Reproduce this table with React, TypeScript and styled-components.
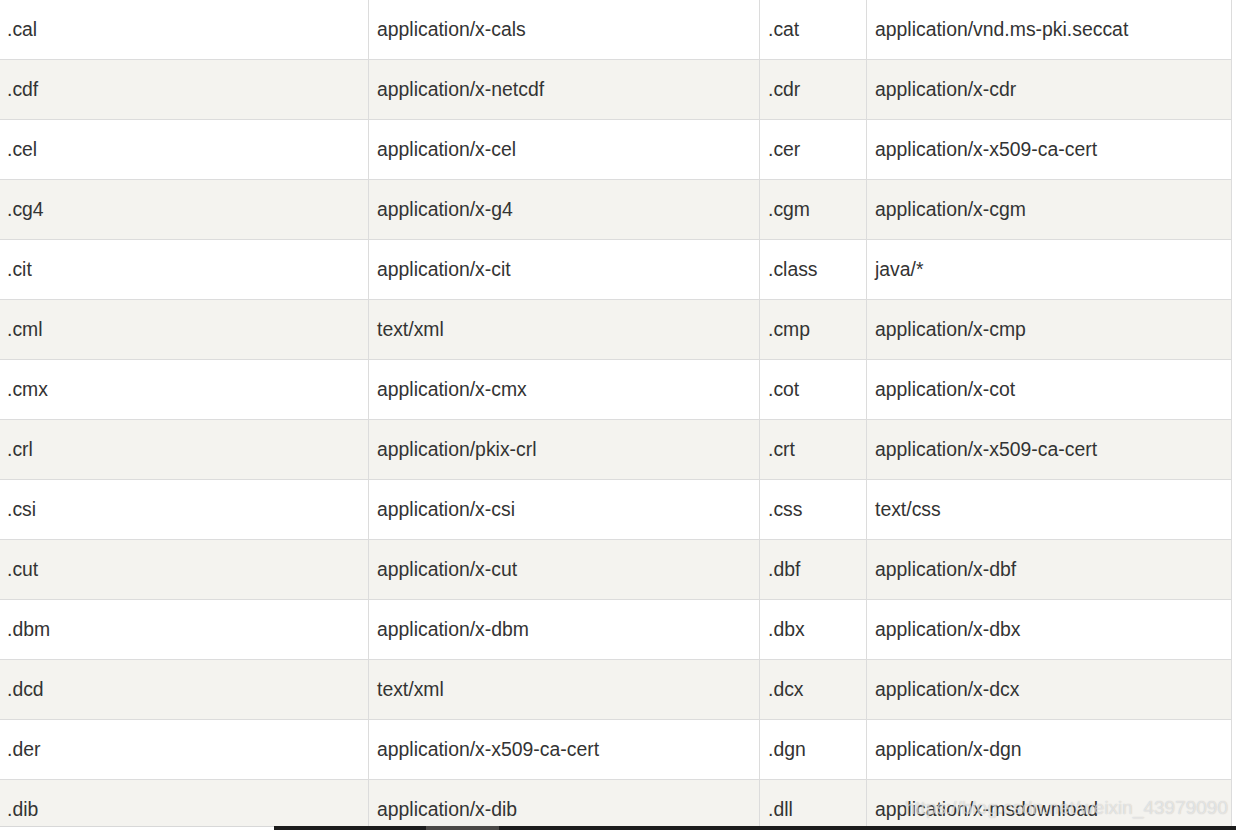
import React from 'react';
import styled, { createGlobalStyle } from 'styled-components';

const GlobalStyle = createGlobalStyle`
  html, body {
    margin: 0;
    padding: 0;
    background: #ffffff;
  }
  body {
    font-family: "Liberation Sans", Arial, sans-serif;
    color: #333333;
    overflow: hidden;
  }
`;

const Page = styled.div`
  position: relative;
  width: 1236px;
  height: 830px;
  overflow: hidden;
  background: #ffffff;
`;

const Viewport = styled.div`
  height: 826px;
  overflow: hidden;
`;

// separate borders so each cell owns its right/bottom line
const Table = styled.table`
  width: 1232px;
  border-collapse: separate;
  border-spacing: 0;
  table-layout: fixed;
  font-size: 19.4px;
  color: #333333;
`;

const Row = styled.tr<{ $alt: boolean }>`
  height: 60px;
  background: ${(p) => (p.$alt ? '#f4f3ef' : '#ffffff')};
`;

const Cell = styled.td<{ $first?: boolean }>`
  box-sizing: border-box;
  height: 60px;
  padding: 0 8px 2px;
  padding-left: ${(p) => (p.$first ? '7px' : '8px')};
  border-right: 1px solid #dcdcdc;
  border-bottom: 1px solid #dcdcdc;
  vertical-align: middle;
  white-space: nowrap;
  line-height: 20px;
`;

// bottom strip: grey line on the left, dark scrollbar track on the right
const BottomStrip = styled.div`
  display: flex;
  height: 4px;
`;

const StripLeft = styled.div`
  width: 274px;
  border-top: 1px solid #d8d8d8;
  box-sizing: border-box;
  background: #ffffff;
`;

const Track = styled.div`
  flex: 1;
  display: flex;
  background: #1c1c1c;
`;

const TrackGap = styled.div`
  width: 152px;
`;

const Thumb = styled.div`
  width: 73px;
  background: #4a4846;
`;

const Watermark = styled.div`
  position: absolute;
  right: 8px;
  top: 797px;
  font-size: 19px;
  color: rgba(255, 255, 255, 0.55);
  text-shadow: 0 0 1px rgba(120, 120, 120, 0.45);
  white-space: nowrap;
  pointer-events: none;
`;

const rows: [string, string, string, string][] = [
  ['.cal', 'application/x-cals', '.cat', 'application/vnd.ms-pki.seccat'],
  ['.cdf', 'application/x-netcdf', '.cdr', 'application/x-cdr'],
  ['.cel', 'application/x-cel', '.cer', 'application/x-x509-ca-cert'],
  ['.cg4', 'application/x-g4', '.cgm', 'application/x-cgm'],
  ['.cit', 'application/x-cit', '.class', 'java/*'],
  ['.cml', 'text/xml', '.cmp', 'application/x-cmp'],
  ['.cmx', 'application/x-cmx', '.cot', 'application/x-cot'],
  ['.crl', 'application/pkix-crl', '.crt', 'application/x-x509-ca-cert'],
  ['.csi', 'application/x-csi', '.css', 'text/css'],
  ['.cut', 'application/x-cut', '.dbf', 'application/x-dbf'],
  ['.dbm', 'application/x-dbm', '.dbx', 'application/x-dbx'],
  ['.dcd', 'text/xml', '.dcx', 'application/x-dcx'],
  ['.der', 'application/x-x509-ca-cert', '.dgn', 'application/x-dgn'],
  ['.dib', 'application/x-dib', '.dll', 'application/x-msdownload'],
];

export default function App() {
  return (
    <Page>
      <GlobalStyle />
      <Viewport>
        <Table>
          <colgroup>
            <col style={{ width: 369 }} />
            <col style={{ width: 391 }} />
            <col style={{ width: 107 }} />
            <col style={{ width: 365 }} />
          </colgroup>
          <tbody>
            {rows.map((r, i) => (
              <Row key={r[0]} $alt={i % 2 === 1}>
                <Cell $first>{r[0]}</Cell>
                <Cell>{r[1]}</Cell>
                <Cell>{r[2]}</Cell>
                <Cell>{r[3]}</Cell>
              </Row>
            ))}
          </tbody>
        </Table>
      </Viewport>
      <BottomStrip>
        <StripLeft />
        <Track>
          <TrackGap />
          <Thumb />
        </Track>
      </BottomStrip>
      <Watermark>https://blog.csdn.net/weixin_43979090</Watermark>
    </Page>
  );
}
